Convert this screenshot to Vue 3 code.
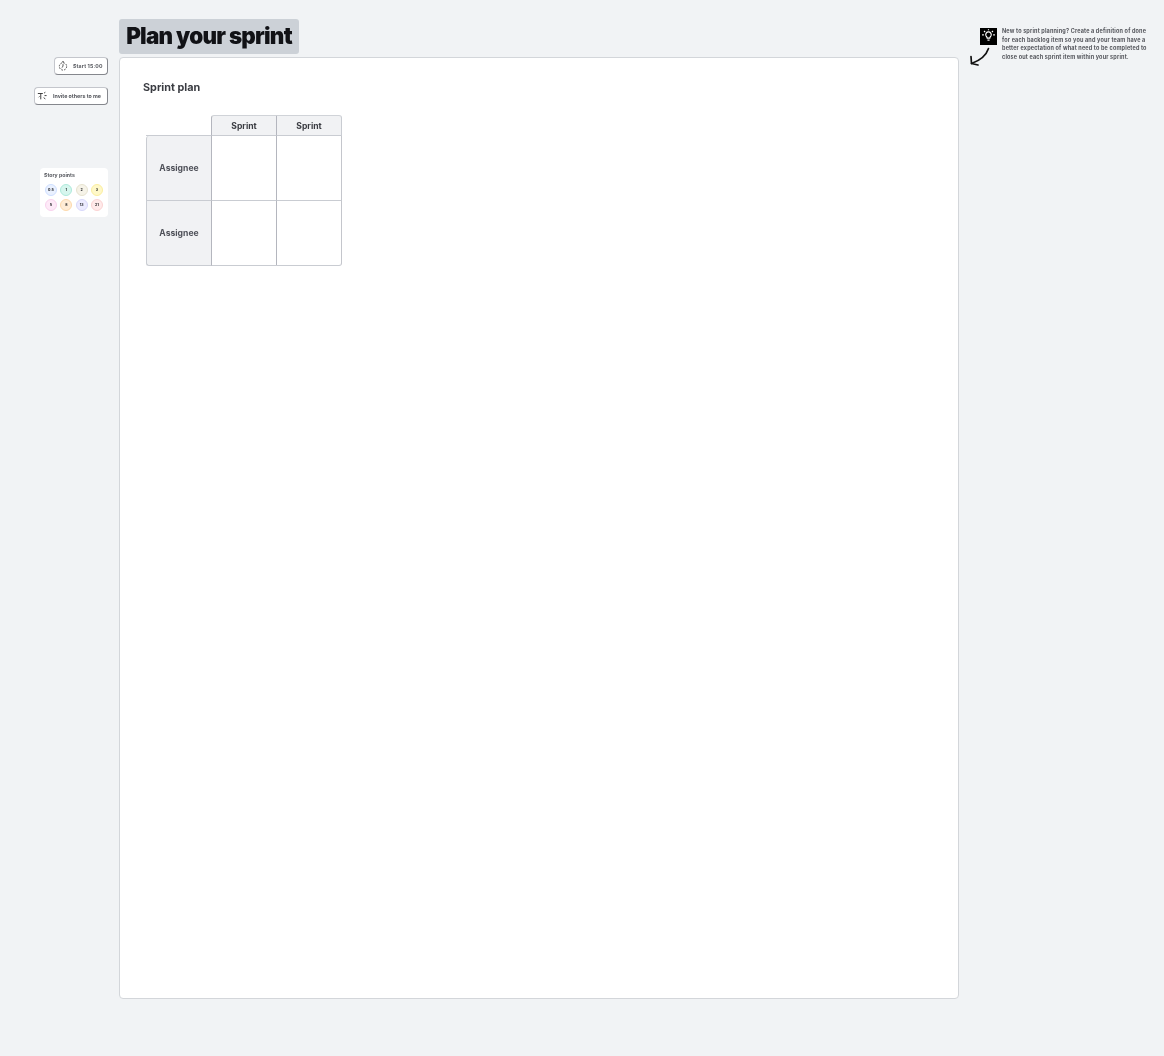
<template>
  <div class="page">
    <aside class="left-col">
      <button class="pill pill-start">
        <svg class="pill-icon" viewBox="0 0 12 12" fill="none" stroke="#333" stroke-width="1">
          <circle cx="6" cy="6.5" r="4.4" stroke-dasharray="2 1.4" />
          <path d="M6 3.8V6.5L4.4 8" />
          <path d="M4.8 1h2.4" />
        </svg>
        <span>Start 15:00</span>
      </button>
      <button class="pill pill-invite">
        <svg class="pill-icon" viewBox="0 0 12 12" fill="none" stroke="#333" stroke-width="1.1">
          <path d="M1 3h6M4.5 3v7" />
          <path d="M8.5 2.5l1.5-1M9 5.5h2.5M8 8l2 1.5M2 7.5l1-1" />
        </svg>
        <span>Invite others to me</span>
      </button>
      <div class="points">
        <div class="points-title">Story points</div>
        <div class="points-grid">
          <span
            v-for="p in points"
            :key="p.label"
            class="point"
            :style="{ background: p.bg, borderColor: p.ring }"
          >{{ p.label }}</span>
        </div>
      </div>
    </aside>

    <main class="center-col">
      <h1 class="title">Plan your sprint</h1>
      <section class="board">
        <h2 class="board-title">Sprint plan</h2>
        <div class="plan-table">
          <div class="corner"></div>
          <div class="head head-first">Sprint</div>
          <div class="head head-last">Sprint</div>

          <div class="side side-first">Assignee</div>
          <div class="cell"></div>
          <div class="cell cell-end"></div>

          <div class="side side-last">Assignee</div>
          <div class="cell cell-bottom"></div>
          <div class="cell cell-end cell-bottom cell-corner"></div>
        </div>
      </section>
    </main>

    <aside class="right-col">
      <div class="tip-icon-wrap">
        <div class="tip-icon">
          <svg viewBox="0 0 16 16" fill="none" stroke="#fff" stroke-width="1.1">
            <path d="M5.6 7.2a2.6 2.6 0 1 1 4.8 0c-.4.8-1 1.2-1.2 2.4H6.8c-.2-1.2-.8-1.6-1.2-2.4z" />
            <path d="M7 11.4h2" />
            <path d="M2 6.5h1.6M12.4 6.5H14M8 1.2v1M3.8 2.8l1 1M12.2 2.8l-1 1" />
          </svg>
        </div>
        <svg class="tip-arrow" viewBox="0 0 22 20" fill="none" stroke="#111" stroke-width="1.7" stroke-linecap="round" stroke-linejoin="round">
          <path d="M19.5 1.5C17.5 7.5 11 13.5 2.5 16.5" />
          <path d="M2 9.5L2.5 16.5L9 18" />
        </svg>
      </div>
      <p class="tip-text">New to sprint planning? Create a definition of done for each backlog item so you and your team have a better expectation of what need to be completed to close out each sprint item within your sprint.</p>
    </aside>
  </div>
</template>

<script setup>
const points = [
  { label: '0.5', bg: '#eaf1ff', ring: '#cfdfff' },
  { label: '1', bg: '#d6f6ee', ring: '#aeeadb' },
  { label: '2', bg: '#f6f3e8', ring: '#e7e3d0' },
  { label: '3', bg: '#fff8c8', ring: '#fbeea0' },
  { label: '5', bg: '#feeaf8', ring: '#f9d2ee' },
  { label: '8', bg: '#ffecd6', ring: '#fdd9ac' },
  { label: '13', bg: '#ecebff', ring: '#d8d8fb' },
  { label: '21', bg: '#ffeaea', ring: '#fbd3d3' }
]
</script>

<style>
html,
body {
  background: #f1f3f5;
}
</style>

<style scoped>
.page {
  display: flex;
  align-items: flex-start;
  height: 1056px;
  overflow: hidden;
  background: #f1f3f5;
  font-family: Inter, "Liberation Sans", sans-serif;
  color: #2b2d33;
  filter: blur(0.35px);
}

/* left tools */
.left-col {
  width: 108px;
  margin-right: 11px;
  padding-top: 57px;
  display: flex;
  flex-direction: column;
  align-items: flex-end;
}

.pill {
  display: flex;
  align-items: center;
  height: 18px;
  padding: 0;
  box-sizing: border-box;
  background: #fff;
  border: 1px solid #c4c6cc;
  border-bottom: 1px solid #85878d;
  border-right: 1px solid #85878d;
  border-radius: 4px;
  font-family: inherit;
  font-weight: 700;
  color: #55575d;
  white-space: nowrap;
}

.pill-start {
  width: 54px;
  font-size: 5.2px;
  letter-spacing: 0.15px;
}

.pill-start .pill-icon {
  margin-left: 3px;
  margin-right: 5px;
}

.pill-invite {
  width: 74px;
  margin-top: 12px;
  font-size: 5.3px;
}

.pill-invite .pill-icon {
  margin-left: 2px;
  margin-right: 6px;
}

.pill-icon {
  width: 10px;
  height: 10px;
  flex: none;
}

.points {
  width: 68px;
  height: 49px;
  margin-top: 63px;
  padding: 3px 4px;
  box-sizing: border-box;
  background: #fff;
  border-radius: 4px;
}

.points-title {
  font-size: 5.2px;
  line-height: 8px;
  font-weight: 700;
  color: #55575d;
}

.points-grid {
  display: grid;
  grid-template-columns: repeat(4, 12px);
  column-gap: 3.3px;
  row-gap: 3.4px;
  margin-top: 5px;
  margin-left: 1px;
}

.point {
  width: 12px;
  height: 12px;
  box-sizing: border-box;
  border: 1px solid;
  border-radius: 50%;
  font-size: 3.6px;
  font-weight: 700;
  line-height: 10px;
  text-align: center;
  color: #1c1d20;
}

/* board */
.center-col {
  width: 840px;
  padding-top: 19px;
}

.title {
  width: 180px;
  height: 35px;
  margin: 0 0 3px;
  box-sizing: border-box;
  background: #ccd1d7;
  border-radius: 3px;
  font-size: 22.4px;
  line-height: 34px;
  font-weight: 900;
  letter-spacing: -0.75px;
  text-align: center;
  white-space: nowrap;
  color: #111216;
}

.board {
  height: 942px;
  box-sizing: border-box;
  padding: 21px 0 0 23px;
  background: #fff;
  border: 1px solid #d3d6da;
  border-radius: 4px;
}

.board-title {
  margin: 0;
  font-size: 10.8px;
  line-height: 17px;
  font-weight: 700;
  color: #3a3c42;
}

.plan-table {
  display: grid;
  grid-template-columns: 65px 65px 66px;
  grid-template-rows: 21px 65px 65px;
  margin: 19px 0 0 3px;
  width: 196px;
}

.corner {
  border-bottom: 1px solid #c9ccd2;
}

.head {
  display: flex;
  align-items: center;
  justify-content: center;
  background: #f1f2f4;
  border-top: 1px solid #d0d3d8;
  border-bottom: 1px solid #c9ccd2;
  border-left: 1px solid #b4b6be;
  font-size: 8.6px;
  font-weight: 700;
  color: #3a3c42;
}

.head-last {
  border-right: 1px solid #c9ccd2;
  border-top-right-radius: 3px;
}

.head-first {
  border-top-left-radius: 3px;
}

.side {
  display: flex;
  align-items: center;
  justify-content: center;
  background: #f1f2f4;
  border-left: 1px solid #c9ccd2;
  border-bottom: 1px solid #c9ccd2;
  font-size: 8.6px;
  font-weight: 700;
  color: #50525a;
}

.side-first {
  border-top-left-radius: 3px;
}

.side-last {
  border-bottom-left-radius: 3px;
}

.cell {
  border-left: 1px solid #b4b6be;
  border-bottom: 1px solid #c9ccd2;
}

.cell-end {
  border-right: 1px solid #c4c6cc;
}

.cell-corner {
  border-bottom-right-radius: 3px;
}

/* right note */
.right-col {
  display: flex;
  align-items: flex-start;
  margin-left: 10px;
  padding-top: 28px;
  width: 185px;
}

.tip-icon-wrap {
  flex: none;
  width: 32px;
  display: flex;
  flex-direction: column;
  align-items: flex-end;
  padding-right: 4px;
  box-sizing: border-box;
}

.tip-icon {
  width: 17px;
  height: 17px;
  background: #000;
}

.tip-icon svg {
  display: block;
  width: 17px;
  height: 17px;
}

.tip-arrow {
  width: 22px;
  height: 20px;
  margin-top: 2px;
  margin-right: 6px;
}

.tip-text {
  margin: -1px 0 0 1px;
  width: 147px;
  font-size: 5.5px;
  line-height: 8.67px;
  font-weight: 700;
  letter-spacing: 0.16px;
  color: #55575d;
}
</style>
